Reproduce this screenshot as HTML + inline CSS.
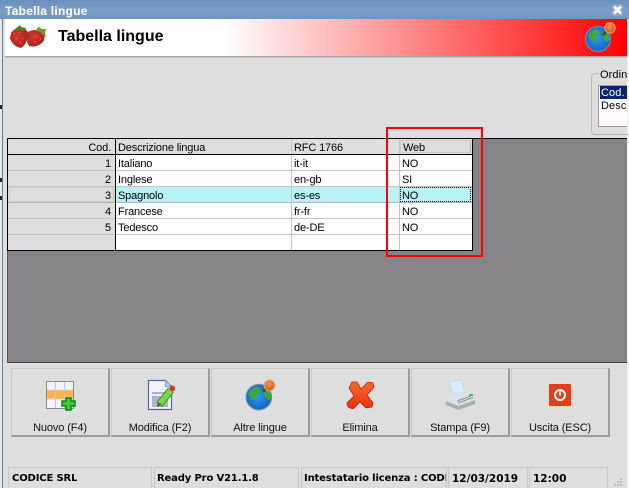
<!DOCTYPE html>
<html><head><meta charset="utf-8"><style>
*{margin:0;padding:0;box-sizing:border-box}
html,body{width:629px;height:488px;overflow:hidden;background:#dedede}
body{position:relative;font-family:"Liberation Sans",sans-serif;font-size:11px;color:#000}
div,svg,span{position:absolute}
.t{white-space:nowrap;line-height:15px;height:15px;letter-spacing:-.15px;margin-top:2px}
.l{height:1px;background:#c6c3c6}
.b{top:368px;width:99px;height:69px;background:#dedede;border:1px solid #c8c8c8;border-right:2px solid #9c9c9c;border-bottom:2px solid #9c9c9c}
.bt{top:421px;width:98px;text-align:center;line-height:14px;white-space:nowrap;letter-spacing:-.12px;color:#111}
.s{top:467px;height:21px;border:1px solid #c8c8c8;border-bottom:none}
.st{top:472px;font-family:"DejaVu Sans",sans-serif;font-weight:bold;font-size:10px;letter-spacing:-.15px;line-height:14px;white-space:nowrap;overflow:hidden}
</style></head><body>
<div style="left:0;top:0;width:2px;height:488px;background:#e8e8e8"></div>
<div style="left:2px;top:0;width:1px;height:488px;background:#5f7ea8"></div>
<div style="left:0;top:178px;width:2px;height:4px;background:#222"></div>
<div style="left:0;top:196px;width:2px;height:4px;background:#222"></div>
<div style="left:0;top:105px;width:2px;height:4px;background:#222"></div>
<div style="left:627px;top:0;width:2px;height:488px;background:#f4f4f4"></div>
<div style="left:0;top:0;width:629px;height:19px;background:linear-gradient(#6a8fbb,#7b9dc6 50%,#7097c2)"></div>
<div class="t" style="left:5px;top:2px;color:#fff;font-weight:bold;font-size:12px;line-height:14px;letter-spacing:.25px">Tabella lingue</div>
<div style="left:612px;top:4px;width:11px;height:12px;background:#8aa6cc"></div>
<svg style="left:612px;top:4px" width="11" height="12"><path d="M2 2.5L9 9.5M9 2.5L2 9.5" stroke="#fff" stroke-width="3"/></svg>

<div style="left:5px;top:19px;width:622px;height:37px;background:linear-gradient(90deg,#fff 0,#fff 220px,#ff0000 622px)"></div>
<div style="left:5px;top:56px;width:622px;height:1px;background:#a8a8a8"></div>
<div style="left:5px;top:57px;width:622px;height:1px;background:#c4c4c4"></div>

<svg style="left:9px;top:24px" width="40" height="26" viewBox="0 0 40 26">
<defs>
<radialGradient id="s" cx=".4" cy=".4" r=".7"><stop offset="0" stop-color="#d8382a"/><stop offset="1" stop-color="#a0201a"/></radialGradient>
<radialGradient id="g" cx=".45" cy=".45" r=".6"><stop offset="0" stop-color="#2c9af0"/><stop offset="1" stop-color="#1460b8"/></radialGradient>
<radialGradient id="o" cx=".45" cy=".35" r=".7"><stop offset="0" stop-color="#f09848"/><stop offset="1" stop-color="#d0501c"/></radialGradient>
<linearGradient id="x" x1="0" y1="0" x2="0" y2="1"><stop offset="0" stop-color="#f86a30"/><stop offset="1" stop-color="#e8300c"/></linearGradient>
</defs>
<path d="M19 8Q26 4 34 8Q37 14 34 18Q28 24 20 22L18 18Z" fill="url(#s)"/>
<path d="M2 9Q6 3 14 4Q20 6 19 13Q17 21 12 24Q3 22 1 14Z" fill="url(#s)"/>
<path d="M5 9l1 1M10 8l1 1M7 14l1 1M13 14l1 1M11 19l1-1M27 12l1 1M31 14l1 1M25 18l1-1" stroke="#e07850" stroke-width="1"/>
<path d="M6 5l5-4 1 2 5 1-2 3-4-1-3 1z" fill="#4f7d2c"/>
<path d="M28 4l2-1 3 2 4 0-1 4 1 4-3-2-3-3-3-1z" fill="#6f9a30"/>
</svg>
<div style="left:58px;top:28px;font-size:16px;font-weight:bold;line-height:18px;white-space:nowrap">Tabella lingue</div>

<svg style="left:585px;top:21px" width="32" height="32" viewBox="0 0 32 32">
<circle cx="13" cy="18" r="12.5" fill="url(#g)" stroke="#6d8fc4"/>
<path d="M3 15q3-6 9-7l3 3-2 4-3 1 1 5-4-1zM18 10l5 2 2 6-3 3-3-3-2-4z" fill="#3da83a"/>
<path d="M18 14l6-7" stroke="#444" stroke-width="2.5"/>
<circle cx="25" cy="7" r="5.2" fill="url(#o)" stroke="#e6a878"/>
</svg>

<!-- Ordina group -->
<div style="left:591px;top:73px;width:42px;height:62px;border:1px solid #b8b8b8;border-radius:4px"></div>
<div style="left:599px;top:68px;width:28px;height:13px;background:#dedede"></div>
<div class="t" style="left:600px;top:66px;letter-spacing:.1px;width:27px;overflow:hidden">Ordina</div>
<div style="left:598px;top:85px;width:29px;height:42px;background:#fffbff;border:1px solid #9c9c9c;border-right:none"></div>
<div style="left:600px;top:86px;width:27px;height:13px;background:#0a246a"></div>
<div class="t" style="left:601px;top:84px;color:#fff;letter-spacing:.1px;width:26px;overflow:hidden">Cod.</div>
<div class="t" style="left:601px;top:97px;letter-spacing:.1px;width:26px;overflow:hidden">Descrizione</div>

<!-- grid area -->
<div style="left:7px;top:138px;width:620px;height:225px;background:#868486;border-top:1px solid #000;border-left:1px solid #555;border-bottom:1px solid #444"></div>
<div style="left:8px;top:139px;width:464px;height:15px;background:#dedede"></div>
<div style="left:8px;top:155px;width:107px;height:95px;background:#dedede"></div>
<div style="left:116px;top:155px;width:356px;height:95px;background:#fffdff"></div>
<div style="left:116px;top:187px;width:356px;height:16px;background:#b5f3f5"></div>

<div class="l" style="left:8px;top:170px;width:464px"></div>
<div class="l" style="left:8px;top:186px;width:464px"></div>
<div class="l" style="left:8px;top:202px;width:464px;background:#b4b4b4"></div>
<div class="l" style="left:8px;top:218px;width:464px"></div>
<div class="l" style="left:8px;top:234px;width:464px"></div>
<div style="left:9px;top:187px;width:105px;height:15px;border:1px solid #cfcfcf;border-right-color:#bbb"></div>
<div style="left:291px;top:139px;width:1px;height:111px;background:#c6c3c6"></div>
<div style="left:399px;top:139px;width:1px;height:111px;background:#c6c3c6"></div>
<div style="left:400px;top:140px;width:71px;height:13px;border:1px solid #cbcbcb;border-right-color:#bbb"></div>
<div style="left:7px;top:154px;width:465px;height:1px;background:#000"></div>
<div style="left:7px;top:250px;width:466px;height:1px;background:#000"></div>
<div style="left:115px;top:139px;width:1px;height:111px;background:#000"></div>
<div style="left:472px;top:139px;width:1px;height:112px;background:#000"></div>
<div style="left:7px;top:139px;width:1px;height:112px;background:#000"></div>

<div class="t" style="left:8px;top:139px;width:103px;text-align:right">Cod.</div>
<div class="t" style="left:118px;top:139px">Descrizione lingua</div>
<div class="t" style="left:294px;top:139px">RFC 1766</div>
<div class="t" style="left:403px;top:139px">Web</div>

<div class="t" style="left:8px;top:155px;width:103px;text-align:right">1</div>
<div class="t" style="left:118px;top:155px">Italiano</div>
<div class="t" style="left:294px;top:155px">it-it</div>
<div class="t" style="left:402px;top:155px">NO</div>

<div class="t" style="left:8px;top:171px;width:103px;text-align:right">2</div>
<div class="t" style="left:118px;top:171px">Inglese</div>
<div class="t" style="left:294px;top:171px">en-gb</div>
<div class="t" style="left:402px;top:171px">SI</div>

<div class="t" style="left:8px;top:187px;width:103px;text-align:right">3</div>
<div class="t" style="left:118px;top:187px">Spagnolo</div>
<div class="t" style="left:294px;top:187px">es-es</div>
<div style="left:400px;top:187px;width:71px;height:15px;border:1px dotted #000"></div>
<div class="t" style="left:402px;top:187px">NO</div>

<div class="t" style="left:8px;top:203px;width:103px;text-align:right">4</div>
<div class="t" style="left:118px;top:203px">Francese</div>
<div class="t" style="left:294px;top:203px">fr-fr</div>
<div class="t" style="left:402px;top:203px">NO</div>

<div class="t" style="left:8px;top:219px;width:103px;text-align:right">5</div>
<div class="t" style="left:118px;top:219px">Tedesco</div>
<div class="t" style="left:294px;top:219px">de-DE</div>
<div class="t" style="left:402px;top:219px">NO</div>

<div style="left:386px;top:127px;width:97px;height:130px;border:2px solid #f00"></div>

<!-- buttons -->
<div class="b" style="left:11px"></div>
<div class="b" style="left:111px"></div>
<div class="b" style="left:211px"></div>
<div class="b" style="left:311px"></div>
<div class="b" style="left:411px"></div>
<div class="b" style="left:511px"></div>
<div class="bt" style="left:11px">Nuovo (F4)</div>
<div class="bt" style="left:111px">Modifica (F2)</div>
<div class="bt" style="left:211px">Altre lingue</div>
<div class="bt" style="left:311px">Elimina</div>
<div class="bt" style="left:411px">Stampa (F9)</div>
<div class="bt" style="left:511px">Uscita (ESC)</div>

<svg style="left:46px;top:381px" width="30" height="30" viewBox="0 0 30 30">
<rect x="0.5" y="0.5" width="27" height="27" fill="#f4f4fc" stroke="#8a8a8a"/>
<rect x="1" y="9" width="26" height="9" fill="#fdb44a"/>
<path d="M9.5 1v26M18.5 1v26" stroke="#c8c8c8"/>
<path d="M1 9h26M1 18h26" stroke="#d0d0d0"/>
<path d="M20 17h5v3h4v5h-4v4h-5v-4h-4v-5h4z" fill="#3ec83a" stroke="#0a8a12" stroke-width="1.5"/>
</svg>

<svg style="left:147px;top:379px" width="30" height="32" viewBox="0 0 30 32">
<path d="M1.5 1.5h17l6 6v23h-23z" fill="#f2f5fb" stroke="#4e6a9c" stroke-width="1.2"/>
<path d="M18.5 1.5v6h6z" fill="#bcd0ec" stroke="#7f9cc8"/>
<rect x="5" y="13" width="16" height="15" fill="#a9b4d2"/>
<rect x="5" y="15" width="16" height="2" fill="#eef0f6"/>
<path d="M12 26L24 11" stroke="#3a8c24" stroke-width="7.5"/>
<path d="M12 26L24 11" stroke="#78d844" stroke-width="5.5"/>
<path d="M10 28l1-5 4 3z" fill="#555"/>
<path d="M22 9l3-3 3 2 0 3-3 2z" fill="#d83a2a"/>
</svg>

<svg style="left:245px;top:379px" width="32" height="32" viewBox="0 0 30 30">
<circle cx="13" cy="17" r="12" fill="url(#g)" stroke="#6d8fc4"/>
<path d="M3 14q3-6 9-7l3 3-2 4-3 1 1 5-4-1zM18 9l5 2 2 6-3 3-3-3-2-4z" fill="#3da83a"/>
<path d="M17 12l6-7" stroke="#444" stroke-width="2.5"/>
<circle cx="23" cy="6" r="5" fill="url(#o)" stroke="#e8a070"/>
</svg>

<svg style="left:346px;top:381px" width="30" height="28" viewBox="0 0 30 28">
<path d="M6 1L11 1L15 8L22 1L27 2L28 6L21 14L27 22L26 26L20 27L14 21L7 28L2 26L1 22L8 15L3 7Z" fill="url(#x)" stroke="#b8200c" stroke-width=".8"/>
</svg>

<svg style="left:445px;top:379px" width="32" height="32" viewBox="0 0 32 32">
<path d="M3.3 2.7L15.7 1L20 13.7L7.7 14.3Z" fill="#d8ecfa" stroke="#c0d0e0" stroke-width=".7"/>
<path d="M.7 19.3L10.7 14.3L24 13.7L30 19.3V25L13.3 31L.7 26Z" fill="#dfe2e4"/>
<path d="M.7 22L13.3 27L30 21V25L13.3 31L.7 26Z" fill="#a8aeb2"/>
<path d="M13 24L28 18.5M12 22L26 17" stroke="#8a9094"/>
<rect x="24" y="15" width="4" height="2" fill="#44c040"/>
</svg>

<svg style="left:548px;top:383px" width="24" height="24" viewBox="0 0 24 24">
<rect x="0.5" y="0.5" width="23" height="23" rx="2" fill="#e0401a" stroke="#f4d0c0"/>
<circle cx="12" cy="12" r="5" fill="none" stroke="#fff" stroke-width="2"/>
<rect x="11" y="6.5" width="2" height="6" fill="#fff"/>
</svg>

<!-- status -->
<div class="s" style="left:8px;width:144px"></div>
<div class="s" style="left:154px;width:145px"></div>
<div class="s" style="left:301px;width:146px"></div>
<div class="s" style="left:448px;width:80px"></div>
<div class="s" style="left:529px;width:79px"></div>
<div class="st" style="left:12px">CODICE SRL</div>
<div class="st" style="left:157px">Ready Pro V21.1.8</div>
<div class="st" style="left:304px;width:142px">Intestatario licenza : CODICE SRL</div>
<div class="st" style="left:452px;font-size:10.5px;letter-spacing:0">12/03/2019</div>
<div class="st" style="left:533px;font-size:10.5px;letter-spacing:0">12:00</div>
<svg style="left:612px;top:476px" width="12" height="12"><path d="M8 2h2v2H8zM5 5h2v2H5zM8 5h2v2H8zM2 8h2v2H2zM5 8h2v2H5zM8 8h2v2H8z" fill="#bcbcbc"/></svg>
</body></html>
